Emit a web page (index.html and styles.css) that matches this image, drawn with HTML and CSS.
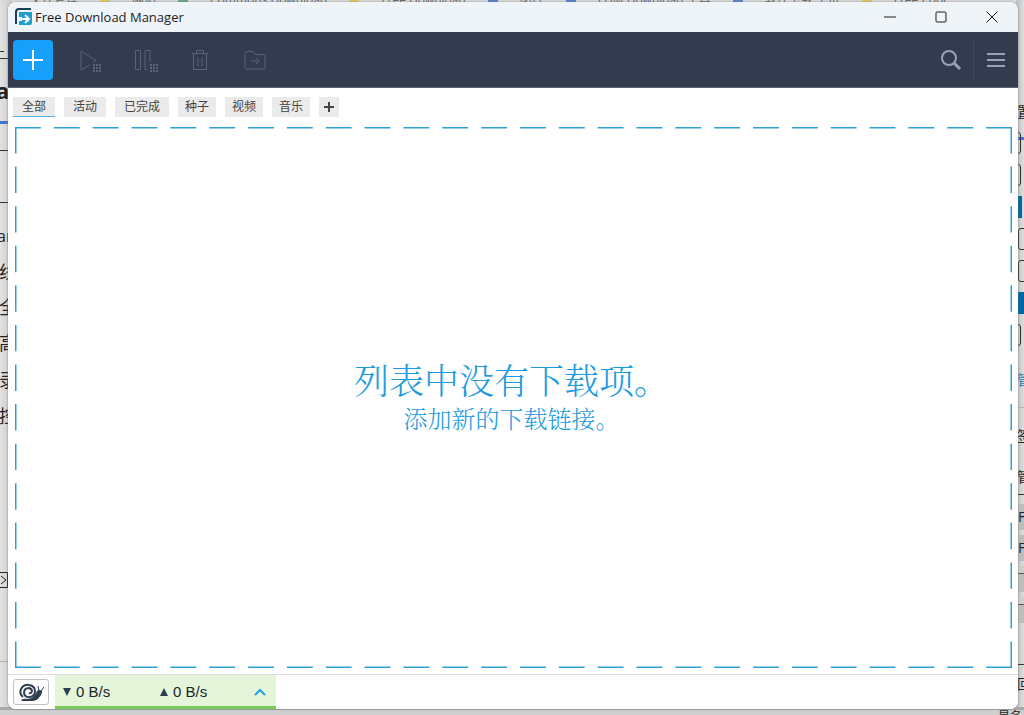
FILE: index.html
```html
<!DOCTYPE html>
<html lang="zh-CN">
<head>
<meta charset="utf-8">
<meta name="viewport" content="width=device-width, initial-scale=1">
<title>Free Download Manager</title>
<link rel="stylesheet" href="styles.css">
</head>
<body>
<div class="desktop">
  <div class="behind behind-top" aria-hidden="true">
    <span>文件管理</span><i class="tint-yellow"></i><span>网站</span><i class="tint-green"></i><span>Commons Download</span><i class="tint-yellow"></i><span>Free Download</span><i class="tint-blue"></i><span>图片</span><i class="tint-blue"></i><span>FDM Download 工具</span><i class="tint-blue"></i><span>软件下载 主页</span><i class="tint-yellow"></i><span>Free Pool</span>
  </div>
  <div class="behind behind-left" aria-hidden="true">
    <i class="rule l1"></i><i class="rule l2"></i><b class="l3">a</b><i class="rule blue l4"></i><i class="rule l5"></i><i class="rule l6"></i>
    <span class="l7">ar</span><span class="l8">线</span><span class="l9">全</span><span class="l10">高</span><span class="l11">录</span><span class="l12">控</span>
    <svg class="l13" viewBox="0 0 9 16"><path d="M0 .5h8.500v15H0M.5 0v16M2 4l5 4-5 4"/></svg><i class="rule pale l14"></i>
  </div>
  <div class="behind behind-right" aria-hidden="true">
    <span class="r1">置</span><i class="rule blue r2"></i><i class="box r3"></i><i class="box r4"></i><i class="fill r5"></i><i class="box wide r6"></i><i class="box wide r7"></i><i class="fill r8"></i><i class="box r9"></i>
    <span class="link r10">管</span><i class="rule pale r11"></i><span class="r12">签</span><span class="r13">管</span><i class="rule r14"></i>
    <span class="key r15">F</span><span class="key r16">F</span><span class="key r17"></span><span class="key r18"></span><i class="rule r19"></i><span class="r20">回</span>
  </div>
  <div class="behind behind-bottom" aria-hidden="true">是名</div>

  <main class="window">
    <header class="titlebar">
      <svg class="logo" viewBox="0 0 18 18" aria-hidden="true">
        <path d="M16 1H4Q1 1 1 4v12" fill="none" stroke="#183e5f" stroke-width="2"/>
        <path d="M4 4h13v11q0 2-2 2H4v-4h3v-4H4z" fill="#1b9fcd" stroke="none"/>
        <path d="M6 11h8M10 7l4 4-4 4" fill="none" stroke="#fff" stroke-width="2"/>
      </svg>
      <h1 class="title">Free Download Manager</h1>
      <div class="window-controls">
        <button class="caption" aria-label="最小化"><svg viewBox="0 0 12 12"><path d="M0 6h12"/></svg></button>
        <button class="caption" aria-label="最大化"><svg viewBox="0 0 12 12"><rect x="1" y="1" width="10" height="10" rx="1"/></svg></button>
        <button class="caption" aria-label="关闭"><svg viewBox="0 0 12 12"><path d="M.5.5l11 11M11.500.5L.5 11.500"/></svg></button>
      </div>
    </header>

    <nav class="toolbar" aria-label="工具栏">
      <button class="add" aria-label="添加下载"><svg viewBox="0 0 20 20"><path d="M10 0v20M0 10h20"/></svg></button>
      <div class="actions">
        <button class="action" aria-label="全部开始"><svg viewBox="0 0 24 24"><path d="M12 17l-9 5V3l15 9.500-3 2"/><path class="dots" d="M15 17h9M15 20h9M15 23h9"/></svg></button>
        <button class="action" aria-label="全部暂停"><svg viewBox="0 0 24 24"><path d="M2.500 2.500h5v19h-5zM17 14V2.500h-5v19h2"/><path class="dots" d="M17 17h9M17 20h9M17 23h9"/></svg></button>
        <button class="action" aria-label="删除"><svg viewBox="0 0 24 24"><path d="M3.500 5.500h17M8.500 5.500v-3h7v3M5.500 5.500v16h13v-16M10 9.500v8.500M14 9.500v8.500"/></svg></button>
        <button class="action" aria-label="移动"><svg viewBox="0 0 24 24"><path d="M4 3.500h6l2 3h8q2 0 2 2V19q0 2-2 2H4q-2 0-2-2V5.500q0-2 2-2zM8 13h8M13 10l3 3-3 3"/></svg></button>
      </div>
      <button class="tool" aria-label="搜索"><svg viewBox="0 0 24 24"><circle cx="10" cy="10" r="7"/><path class="thick" d="M15 15l6 6"/></svg></button>
      <button class="tool menu" aria-label="菜单"><svg viewBox="0 0 24 24"><path d="M3 6h18M3 12h18M3 18h18"/></svg></button>
    </nav>

    <nav class="tabs" aria-label="筛选">
      <button class="tab roomy active">全部</button>
      <button class="tab roomy">活动</button>
      <button class="tab roomy">已完成</button>
      <button class="tab">种子</button>
      <button class="tab">视频</button>
      <button class="tab">音乐</button>
      <button class="tab plus" aria-label="添加标签"><svg viewBox="0 0 12 12"><path d="M6 1v10M1 6h10"/></svg></button>
    </nav>

    <section class="dropzone">
      <svg class="dashes" aria-hidden="true">
        <line x1="0" y1="0" x2="100%" y2="0" pathLength="77"/>
        <line x1="0" y1="100%" x2="100%" y2="100%" pathLength="77"/>
        <line x1="0" y1="0" x2="0" y2="100%" pathLength="41"/>
        <line x1="100%" y1="0" x2="100%" y2="100%" pathLength="41"/>
      </svg>
      <h2 class="empty-title">列表中没有下载项。</h2>
      <p class="empty-hint">添加新的下载链接。</p>
    </section>

    <footer class="status">
      <button class="snail" aria-label="蜗牛模式">
        <svg viewBox="0 0 26 20">
          <path class="body" d="M3 18q3-2 7-1 6-1 8-6 1-3 3-3 4 0 3 3-3 7-9 8H4z"/>
          <path class="spiral" d="M5 15Q1 12 3 7q3-5 8-4 6 1 6 6 0 5-5 6-5 1-6-4 0-5 5-5 3 1 3 3-1 3-3 2"/>
          <path class="horns" d="M21 9l-1-5M23 9l3-4"/>
        </svg>
      </button>
      <div class="speeds">
        <span class="speed"><svg class="arrow" viewBox="0 0 10 10"><path d="M1 1h8l-4 8z"/></svg>0 B/s</span>
        <span class="speed"><svg class="arrow" viewBox="0 0 10 10"><path d="M1 9h8l-4-8z"/></svg>0 B/s</span>
        <button class="expand" aria-label="展开"><svg viewBox="0 0 12 8"><path d="M1 7l5-5 5 5"/></svg></button>
      </div>
    </footer>
  </main>
</div>
</body>
</html>
```
FILE: styles.css
```css
* { box-sizing: border-box; }
body { margin: 0; font-family: "Open Sans", "Noto Sans CJK SC", sans-serif; }
button { margin: 0; padding: 0; border: 0; background: none; font: inherit; color: inherit; }
svg { display: block; fill: none; stroke: currentColor; }
.desktop { position: relative; display: flex; height: 100vh; padding: 2px 6px 6px 8px; background: #dcdcdc; overflow: hidden; }

/* Page lying behind the window */
.behind { position: absolute; color: #222; overflow: hidden; font-size: 16px; line-height: 20px; }
.behind > * { position: absolute; }
.behind-top { inset: 0 0 auto 0; height: 6px; display: flex; align-items: flex-end; gap: 22px; padding-left: 30px; font-size: 12px; line-height: 13px; color: #666; white-space: nowrap; }
.behind-top > * { position: static; flex: none; }
.behind-top > i { width: 10px; height: 6px; }
.tint-yellow { background: #dccb69; }
.tint-green { background: #62a989; }
.tint-blue { background: #5681cf; }
.behind-left { inset: 0 auto 0 0; width: 12px; background: linear-gradient(90deg, #e2e2e2, #c9c9c9); }
.behind-right { inset: 0 0 0 auto; width: 8px; background: linear-gradient(90deg, #bdbdbd, #dedede); }
.behind-bottom { inset: auto 0 0 0; height: 8px; padding-right: 2px; border-top: 3px solid #a9a9a9; background: #cfcfcf; font-size: 12px; line-height: 14px; text-align: right; }
.rule { left: 0; width: 100%; height: 1px; background: #333; }
.rule.blue { height: 3px; background: #3f74d1; }
.rule.pale { background: #b5b5b5; }
.box { left: -12px; width: 17px; height: 22px; border: 1px solid #333; border-radius: 3px; }
.box.wide { left: 2px; }
.fill { left: 0; width: 8px; height: 22px; background: #0067a5; }
.key { left: 0; width: 8px; height: 26px; padding-left: 2px; background: #bdbdbd; font-size: 14px; line-height: 26px; }
.link { color: #2680a8; }
.l1 { top: 51px; width: 4px; } .l2 { top: 58px; }
.l3 { top: 80px; left: -4px; font-size: 22px; }
.l4 { top: 121px; } .l5 { top: 150px; } .l6 { top: 202px; }
.l7 { top: 226px; left: -3px; } .l8 { top: 262px; } .l9 { top: 297px; } .l10 { top: 333px; } .l11 { top: 370px; } .l12 { top: 406px; }
.l8, .l9, .l10, .l11, .l12 { left: -1px; font-size: 18px; }
.l13 { top: 572px; left: -1px; width: 9px; height: 16px; } .l14 { top: 661px; }
.r1 { top: 102px; } .r2 { top: 137px; } .r3 { top: 132px; } .r4 { top: 164px; } .r5 { top: 196px; width: 6px; }
.r6 { top: 228px; } .r7 { top: 260px; } .r8 { top: 292px; } .r9 { top: 324px; }
.r10 { top: 370px; } .r11 { top: 407px; } .r12 { top: 426px; } .r13 { top: 467px; } .r14 { top: 494px; }
.r15 { top: 504px; } .r16 { top: 535px; } .r17 { top: 566px; } .r18 { top: 597px; } .r19 { top: 664px; } .r20 { top: 674px; }
.r17, .r18 { border-top: 7px solid #cfcfcf; border-bottom: 0; box-shadow: inset 0 1px #555; }
.r1, .r10, .r12, .r13, .r20 { left: 1px; font-size: 14px; }

/* Window */
.window { position: relative; flex: 1; display: flex; flex-direction: column; min-width: 0; border-radius: 8px; background: #fff; overflow: hidden; box-shadow: 0 0 2px #777; }
.titlebar { flex: none; display: flex; align-items: center; height: 30px; padding: 0 1px 0 7px; background: #eff4f9; color: #1d1d1d; }
.logo { width: 18px; height: 18px; }
.title { flex: 1; margin: 0 0 0 2px; font-size: 13px; line-height: 20px; font-weight: 400; }
.window-controls { display: flex; }
.caption { display: grid; place-items: center; width: 51px; height: 30px; }
.caption svg { width: 12px; height: 12px; }

.toolbar { flex: none; display: flex; align-items: center; height: 56px; padding: 0 0 0 5px; background: #333b4e; border-bottom: 1px solid #5c6373; }
.add { display: grid; place-items: center; width: 40px; height: 40px; border-radius: 4px; background: #16a0fb; color: #fff; }
.add svg { width: 20px; height: 20px; stroke-width: 2; }
.actions { flex: 1; display: flex; padding-left: 9px; }
.action { display: grid; place-items: center; width: 55px; height: 40px; color: #5a6377; }
.action svg { width: 24px; height: 24px; overflow: visible; }
.dots { stroke-width: 2; stroke-dasharray: 2 1; }
.tool { display: grid; place-items: center; width: 45px; height: 38px; color: #94a4ba; }
.tool svg { width: 24px; height: 24px; stroke-width: 2; }
.tool .thick { stroke-width: 3; }
.menu { border-left: 1px solid #434c5f; }

.tabs { flex: none; display: flex; align-items: center; gap: 9px; height: 38px; margin-bottom: 1px; padding: 0 6px 0 5px; }
.tab { height: 20px; padding: 1px 7px 0; background: #ebebeb; color: #444; font-size: 12px; line-height: 18px; border-bottom: 1px solid #ebebeb; }
.roomy { padding: 1px 9px 0; }
.active { border-color: #4eaede; }
.plus { padding: 0 4px; }
.plus svg { width: 12px; height: 12px; stroke-width: 2; }

.dropzone { position: relative; flex: 1; display: flex; flex-direction: column; align-items: center; justify-content: center; min-height: 0; margin: 0 6px 6px 7px; padding: 0 4px 4px 0; color: #1e9be0; font-family: "Noto Serif CJK SC", "Noto Sans CJK SC", serif; font-weight: 300; text-align: center; }
.dashes { position: absolute; inset: 0; width: 100%; height: 100%; overflow: hidden; stroke: #2f9fd0; stroke-width: 3; stroke-dasharray: 2 1; }
.empty-title { margin: 0; font-size: 35px; line-height: 44px; font-weight: 300; }
.empty-hint { margin: 0; font-size: 24px; line-height: 34px; }

.status { flex: none; display: flex; align-items: stretch; height: 35px; padding-left: 5px; border-top: 1px solid #ddd; background: #fff; }
.snail { align-self: center; display: grid; place-items: center; width: 36px; height: 26px; margin-right: 6px; border: 1px solid #bfc0c8; border-radius: 3px; color: #2f3e50; }
.snail svg { width: 26px; height: 20px; }
.body { fill: currentColor; stroke: none; }
.spiral { stroke-width: 2; }
.horns { stroke-width: 1; }
.speeds { display: flex; align-items: center; width: 221px; padding: 2px 0 0 7px; border-bottom: 3px solid #7bcb5b; background: #e4f5da; color: #1c242c; font-family: "Liberation Sans", sans-serif; font-size: 15px; }
.speed { display: flex; align-items: center; gap: 4px; width: 97px; }
.speed + .speed { width: 93px; }
.arrow { width: 10px; height: 10px; fill: #2f3e50; stroke: none; }
.expand { display: grid; place-items: center; width: 16px; height: 24px; color: #239fe7; }
.expand svg { width: 12px; height: 8px; stroke-width: 2; }
```
